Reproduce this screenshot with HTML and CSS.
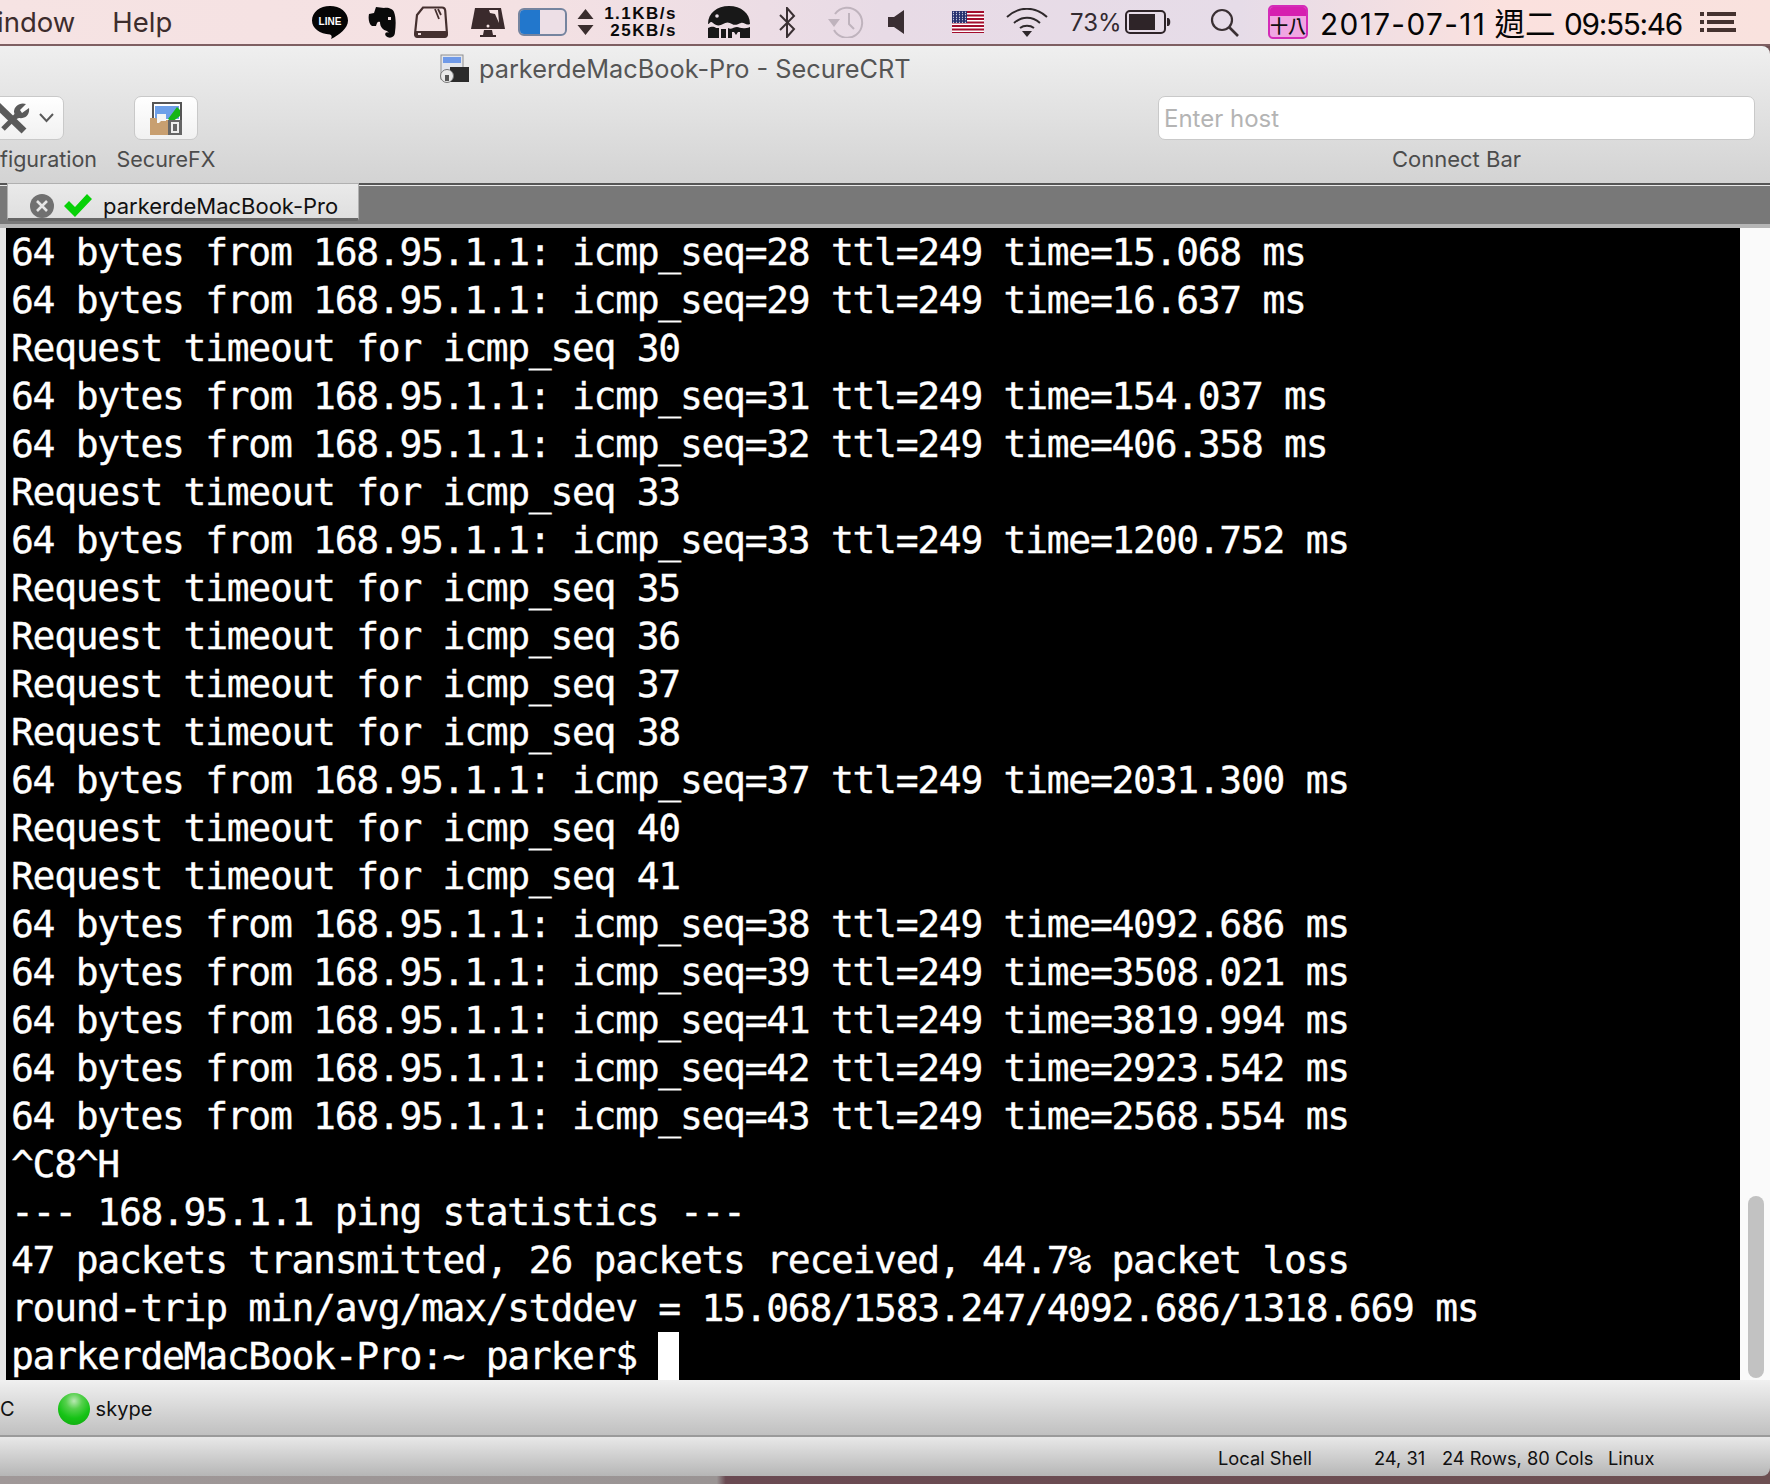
FILE: index.html
```html
<!DOCTYPE html>
<html lang="en">
<head>
<meta charset="utf-8">
<title>SecureCRT</title>
<link rel="stylesheet" href="styles.css">
</head>
<body>
<div class="menubar">
  <div class="menus"><span>indow</span><span>Help</span></div>
  <div class="status">
    <svg class="i-line" width="36" height="33" viewBox="0 0 36 33"><path d="M18 0c10 0 18 6 18 14.500 0 8-9 14.500-17 18.500 1-2 1-4-1-4.500C8 28 0 22.500 0 14.500 0 6 8 0 18 0z" fill="#050505"/><text x="18" y="19" text-anchor="middle" class="line-t">LINE</text></svg>
    <svg class="i-ever" width="28" height="31" viewBox="0 0 28 31"><path d="M8 0L6 6 1 7C0 12 1 17 4 19h4c1-4 2-5 4-4 0 5 3 8 7 9l2 2c-3-2-5 1-3 3 3 3 9 2 9-4 1-7 1-15-1-20-1-3-6-5-10-4z" fill="#0a0a0a"/><path d="M20 10h3v3h-3z" fill="#f3e0e2"/></svg>
    <svg class="i-disk" width="34" height="32" viewBox="0 0 34 32"><path d="M9 1.500h19c2 0 3 1 3.200 3L33 28c0 2-1 3-3 3H4c-2 0-3-1-3-3L3 9z" fill="none" stroke="#45302f" stroke-width="2.200"/><path d="M2 25h30l1 6H1z" fill="#45302f"/><path d="M21 3l4 10 M24 3l3 6" stroke="#45302f" stroke-width="1.800"/><rect x="4" y="27" width="3" height="2" fill="#f3e0e2"/></svg>
    <svg class="i-mac" width="34" height="29" viewBox="0 0 34 29"><path d="M4 0h26l4 21H0z" fill="#3a2a2c"/><path d="M18 2l9 0 1 13-4-9-5-1z" fill="#f5e4e5"/><path d="M13 22h8l1 5h3v2H9v-2h3z" fill="#3a2a2c"/><circle cx="17" cy="18" r="1.500" fill="#f5e4e5"/></svg>
    <div class="toggle"><span class="toggle-on"></span></div>
    <svg class="i-arrows" width="17" height="26" viewBox="0 0 17 26"><path d="M8.500 0l8 10H.5zM8.500 26l8-10H.5z" fill="#3a2e2e"/></svg>
    <div class="net"><span>1.1KB/s</span><span>25KB/s</span></div>
    <svg class="i-igloo" width="42" height="32" viewBox="0 0 42 32"><path d="M0 18C0 7 9 0 21 0s21 7 21 18c-4 2-6-2-9-1s-6 3-9 1-6-2-9 0-7 2-10-1-3 1-5 1z" fill="#181818"/><circle cx="9" cy="10" r="1.800" fill="#eadfe8"/><path d="M0 22c3-1 5-2 8 0h3v10H0zM13 23h5v9h-5zM20 22c3 2 6-1 9-1s5 3 13 0v11H32v-6h-2l-2 3-2-3h-2v6h-4z" fill="#181818"/></svg>
    <svg class="i-bt" width="18" height="31" viewBox="0 0 18 31"><path d="M2 8l14 14-7 8V1l7 8L2 23" fill="none" stroke="#3a3033" stroke-width="2"/></svg>
    <svg class="i-tm" width="37" height="32" viewBox="0 0 37 32"><path d="M7 8a15 15 0 1 1-1 16" fill="none" stroke="#bfb3bd" stroke-width="2"/><path d="M0 13h12l-6 8z" fill="#bfb3bd"/><path d="M21 7v11l5 5" fill="none" stroke="#bfb3bd" stroke-width="2"/></svg>
    <svg class="i-spk" width="16" height="24" viewBox="0 0 16 24"><path d="M0 7h6l10-7v24L6 17H0z" fill="#3a2e33"/></svg>
    <svg class="i-flag" width="32" height="22" viewBox="0 0 32 22"><defs><pattern id="st" width="3" height="2.500" patternUnits="userSpaceOnUse"><circle cx="1.500" cy="1.200" r=".6" fill="#fff"/></pattern></defs><rect width="32" height="22" fill="#fff"/><path d="M0 0h32v2H0zM0 3.500h32v2H0zM0 7h32v2H0zM0 10.500h32v2H0zM0 14h32v2H0zM0 17.500h32v2H0zM0 21h32v1H0z" fill="#a30d2d"/><rect width="15" height="12" fill="#27306f"/><rect width="15" height="12" fill="url(#st)"/></svg>
    <svg class="i-wifi" width="42" height="29" viewBox="0 0 42 29"><path d="M1 9c12-11 28-11 40 0M8 15c8-7 18-7 26 0M14 20c4-3 10-3 14 0" fill="none" stroke="#2e282b" stroke-width="2"/><path d="M16 23h10l-5 6z" fill="#2e282b"/></svg>
    <span class="pct">73%</span>
    <svg class="i-batt" width="46" height="24" viewBox="0 0 46 24"><rect x="1" y="1" width="39" height="22" rx="4" fill="none" stroke="#2e2428" stroke-width="2"/><rect x="4" y="4" width="26" height="16" fill="#2e2428"/><path d="M42 8h1c3 0 3 8 0 8h-1z" fill="#2e2428"/></svg>
    <svg class="i-search" width="29" height="29" viewBox="0 0 29 29"><circle cx="12" cy="12" r="10" fill="none" stroke="#3a3033" stroke-width="2.200"/><path d="M19 19l9 9" stroke="#3a3033" stroke-width="2.600"/></svg>
    <div class="cal"><span class="cal-top"></span><span class="cal-day">十八</span></div>
    <span class="clock"><span class="c-date">2017-07-11</span> <span class="c-day">週二</span> <span class="c-time">09:55:46</span></span>
    <svg class="i-list" width="36" height="20" viewBox="0 0 36 20"><path d="M0 0h4v4H0zM0 8h4v4H0zM0 16h4v4H0zM7 0h29v4H7zM7 8h27v4H7zM7 16h29v4H7z" fill="#45322f"/></svg>
  </div>
</div>

<div class="window">
  <header class="chrome">
    <div class="title">
      <svg width="30" height="29" viewBox="0 0 30 29"><rect x="2" y="1" width="22" height="24" fill="#e3e6ec" stroke="#8f8f8f"/><rect x="4" y="3" width="18" height="6" fill="#6f9ae8"/><rect x="11" y="13" width="19" height="15" fill="#2b2b2b"/><circle cx="8" cy="22" r="6.500" fill="#e9e9e9" stroke="#777"/><rect x="6" y="21" width="4" height="6" fill="#555"/></svg>
      <span>parkerdeMacBook-Pro - SecureCRT</span>
    </div>
    <div class="tools">
      <div class="tool tool-config">
        <div class="btn btn-config">
          <svg width="30" height="31" viewBox="0 0 30 31"><path d="M-3 2L24 28" stroke="#5a5a5a" stroke-width="7"/><path d="M3 26L18 11" stroke="#5a5a5a" stroke-width="5"/><path d="M14 9c0-6 6-10 12-8l-6 6 2 3 7-5c1 7-4 11-10 10l-3 1z" fill="#5a5a5a"/></svg>
          <svg class="chev" width="15" height="10" viewBox="0 0 15 10"><path d="M1 1l6.500 7L14 1" fill="none" stroke="#5a5a5a" stroke-width="2"/></svg>
        </div>
        <span class="label">figuration</span>
      </div>
      <div class="tool tool-fx">
        <div class="btn btn-fx">
          <svg width="32" height="33" viewBox="0 0 32 33"><rect x="3" y="1" width="28" height="31" fill="#fff" stroke="#555" stroke-width="2"/><rect x="5" y="4" width="24" height="13" fill="#6d9fe8"/><path d="M18 17l9-12 3 3v6l-8 6z" fill="#16b516"/><path d="M0 16h6l2 2h10v15H0z" fill="#c89f70"/><path d="M7 12h9v7H11l-2 2H7z" fill="#f4f4f4"/><rect x="18" y="18" width="14" height="15" fill="#666"/><rect x="22" y="21" width="6" height="9" fill="none" stroke="#eee" stroke-width="2"/></svg>
        </div>
        <span class="label">SecureFX</span>
      </div>
      <div class="tool tool-connect">
        <div class="host">Enter host</div>
        <span class="label label-connect">Connect Bar</span>
      </div>
    </div>
  </header>

  <div class="tabbar">
    <div class="tab">
      <svg width="24" height="24" viewBox="0 0 24 24"><circle cx="12" cy="12" r="12" fill="#707070"/><path d="M7 7l10 10M17 7L7 17" stroke="#e6e6e6" stroke-width="2.600"/></svg>
      <svg class="check" width="28" height="23" viewBox="0 0 28 23"><path d="M0 12l5-5 6 6L23 0l5 5-17 18z" fill="#07d107"/></svg>
      <span>parkerdeMacBook-Pro</span>
    </div>
  </div>

  <main class="term-wrap">
    <pre class="term">64 bytes from 168.95.1.1: icmp_seq=28 ttl=249 time=15.068 ms
64 bytes from 168.95.1.1: icmp_seq=29 ttl=249 time=16.637 ms
Request timeout for icmp_seq 30
64 bytes from 168.95.1.1: icmp_seq=31 ttl=249 time=154.037 ms
64 bytes from 168.95.1.1: icmp_seq=32 ttl=249 time=406.358 ms
Request timeout for icmp_seq 33
64 bytes from 168.95.1.1: icmp_seq=33 ttl=249 time=1200.752 ms
Request timeout for icmp_seq 35
Request timeout for icmp_seq 36
Request timeout for icmp_seq 37
Request timeout for icmp_seq 38
64 bytes from 168.95.1.1: icmp_seq=37 ttl=249 time=2031.300 ms
Request timeout for icmp_seq 40
Request timeout for icmp_seq 41
64 bytes from 168.95.1.1: icmp_seq=38 ttl=249 time=4092.686 ms
64 bytes from 168.95.1.1: icmp_seq=39 ttl=249 time=3508.021 ms
64 bytes from 168.95.1.1: icmp_seq=41 ttl=249 time=3819.994 ms
64 bytes from 168.95.1.1: icmp_seq=42 ttl=249 time=2923.542 ms
64 bytes from 168.95.1.1: icmp_seq=43 ttl=249 time=2568.554 ms
^C8^H
--- 168.95.1.1 ping statistics ---
47 packets transmitted, 26 packets received, 44.7% packet loss
round-trip min/avg/max/stddev = 15.068/1583.247/4092.686/1318.669 ms
parkerdeMacBook-Pro:~ parker$ <span class="cursor"></span></pre>
    <div class="scrolltrack"><div class="scrollthumb"></div></div>
  </main>

  <div class="sessionbar">
    <span class="cut">C</span>
    <span class="led"></span>
    <span>skype</span>
  </div>
  <footer class="statusbar">
    <span class="s-shell">Local Shell</span>
    <span class="s-pos">24, 31</span>
    <span class="s-size">24 Rows, 80 Cols</span>
    <span class="s-os">Linux</span>
  </footer>
</div>
<div class="desktop"></div>
</body>
</html>
```
FILE: styles.css
```css
* { box-sizing: border-box; }
html, body { margin: 0; padding: 0; }
body {
  width: 1770px;
  height: 1484px;
  overflow: hidden;
  font-family: "Liberation Sans", Arial, sans-serif;
  display: flex;
  flex-direction: column;
  background: #6d5052;
}
.menubar {
  height: 46px;
  flex: none;
  display: flex;
  align-items: center;
  background: linear-gradient(90deg, #f6e3e3 0%, #f4e1e3 30%, #e8dbe6 50%, #e6dce8 70%, #fbe1de 85%, #f9e2de 100%);
  border-bottom: 2px solid #7e5f62;
  font-family: "Inter", sans-serif;
  color: #3d2d2d;
}
.menus { display: flex; font-size: 27.500px; gap: 37px; margin-left: -3px; }
.status { display: flex; align-items: center; margin-left: auto; margin-right: 34px; }
.status > * { flex: none; white-space: nowrap; }
.line-t { font: bold 10px "Liberation Sans", sans-serif; fill: #fff; }
.i-ever { margin-left: 20px; }
.i-disk { margin-left: 18px; }
.i-mac { margin-left: 23px; }
.toggle { width: 49px; height: 28px; margin-left: 13px; border: 2px solid #75849f; border-radius: 6px; background: #eddfe6; overflow: hidden; }
.toggle-on { display: block; width: 20px; height: 100%; background: #2277cc; }
.i-arrows { margin-left: 10px; }
.net { width: 73px; margin-left: 10px; display: flex; flex-direction: column; align-items: flex-end; font: bold 17px/17px "Liberation Sans", sans-serif; color: #0a0a0a; letter-spacing: 1.500px; }
.i-igloo { margin-left: 31px; }
.i-bt { margin-left: 28px; }
.i-tm { margin-left: 32px; }
.i-spk { margin-left: 23px; }
.i-flag { margin-left: 48px; }
.i-wifi { margin-left: 22px; }
.pct { width: 47px; margin-left: 22px; font-size: 24px; color: #332a30; }
.i-batt { margin-left: 8px; }
.i-search { margin-left: 39px; }
.cal { width: 40px; height: 34px; margin-left: 29px; background: #f0a6e2; border: 2px solid #d42bb8; border-radius: 5px; overflow: hidden; }
.cal-top { display: block; height: 9px; background: #d61fb0; }
.cal-day { display: block; font: 500 18px/19px "Noto Sans CJK TC", sans-serif; text-align: center; color: #111; }
.clock { width: 362px; margin-left: 12px; font: 29.800px "Inter", "Noto Sans CJK TC", sans-serif; color: #050505; }
.c-date { letter-spacing: 1.350px; }
.c-day { font-size: 30.500px; }
.c-time { letter-spacing: -1.300px; }
.i-list { margin-left: 18px; }
.window {
  flex: none;
  height: 1430px;
  display: flex;
  flex-direction: column;
  border-radius: 0 8px 8px 0;
  overflow: hidden;
}
.chrome {
  height: 139px;
  flex: none;
  background: linear-gradient(#efefef, #d3d3d3);
  border-bottom: 2px solid #555;
  display: flex;
  flex-direction: column;
}
.title {
  height: 44px;
  margin-bottom: 2px;
  display: flex;
  align-items: center;
  gap: 10px;
  margin-left: 439px;
  font: 25.300px "Inter", sans-serif;
  color: #555;
}
.tools { display: flex; margin-top: 4px; }
.tool { display: flex; flex-direction: column; align-items: center; flex: none; }
.btn, .host { height: 44px; background: linear-gradient(#fff, #f1f1f1); border: 1px solid #c9c9c9; border-radius: 7px; display: flex; align-items: center; justify-content: center; }
.label { font: 21.500px/26px "Inter", sans-serif; color: #4c4c4c; margin-top: 6px; white-space: nowrap; }
.label-connect { font-size: 22px; }
.tool-config { width: 115px; align-items: flex-start; }
.btn-config { width: 72px; margin-left: -8px; padding-left: 7px; justify-content: flex-start; }
.chev { margin-left: 9px; }
.tool-fx { width: 102px; }
.btn-fx { width: 64px; }
.tool-connect { width: 597px; margin-left: 941px; }
.host { width: 100%; justify-content: flex-start; padding: 1px 0 0 5px; font: 24px "Inter", sans-serif; color: #b4b4b4; background: #fff; }
.tabbar {
  height: 43px;
  flex: none;
  background: #787878;
  border-top: 1px solid #e8e8e8;
  border-bottom: 4px solid #b5b5b5;
  padding-left: 7px;
}
.tab {
  width: 352px;
  height: 38px;
  margin-top: -3px;
  display: flex;
  align-items: center;
  background: linear-gradient(#eaeaea, #dfdfdf);
  border: 1px solid #b0b0b0;
  border-bottom: 3px solid #666;
  border-radius: 0 0 3px 3px;
  padding: 9px 0 0 22px;
  font: 22px "Inter", sans-serif;
  color: #111;
  white-space: nowrap;
}
.check { margin: 0 11px 0 10px; }
.term-wrap { flex: none; height: 1152px; display: flex; background: #e6e6e6; padding-left: 6px; }
.term {
  flex: none;
  width: 1734px;
  height: 100%;
  margin: 0;
  padding: 0 0 0 5px;
  overflow: hidden;
  background: #000;
  color: #fff;
  font: 38px/48px "DejaVu Sans Mono", monospace;
  letter-spacing: -1.300px;
  -webkit-text-stroke: 0.35px #fff;
}
.cursor { display: inline-block; width: 21px; height: 48px; vertical-align: top; background: #fff; }
.scrolltrack { flex: 1; background: #fafafa; display: flex; align-items: flex-end; justify-content: center; padding-left: 2px; }
.scrollthumb { width: 16px; height: 182px; margin-bottom: 2px; background: #c2c2c2; border-radius: 8px; }
.sessionbar {
  height: 57px;
  flex: none;
  display: flex;
  align-items: center;
  padding-top: 2px;
  background: linear-gradient(#f0f0f0, #c0c0c0);
  border-bottom: 2px solid #9a9a9a;
  font: 20px "Inter", sans-serif;
  color: #111;
}
.led { width: 32px; height: 32px; margin: 0 6px 0 43px; border-radius: 50%; background: radial-gradient(circle at 50% 25%, #b9e8b3 0%, #55d04c 28%, #16c316 60%, #0ea50e 100%); }
.statusbar {
  height: 39px;
  flex: none;
  display: flex;
  align-items: center;
  padding-top: 2px;
  background: linear-gradient(#e8e8e8, #b6b6b6);
  font: 18.300px "Inter", sans-serif;
  color: #111;
}
.s-shell { margin-left: 1218px; width: 156px; }
.s-pos { width: 68px; }
.s-size { width: 166px; }
.desktop { flex: 1; background: linear-gradient(90deg, #a09898 0%, #9a9494 40.500%, #6a4a52 41%, #6d5052 100%); }
```
